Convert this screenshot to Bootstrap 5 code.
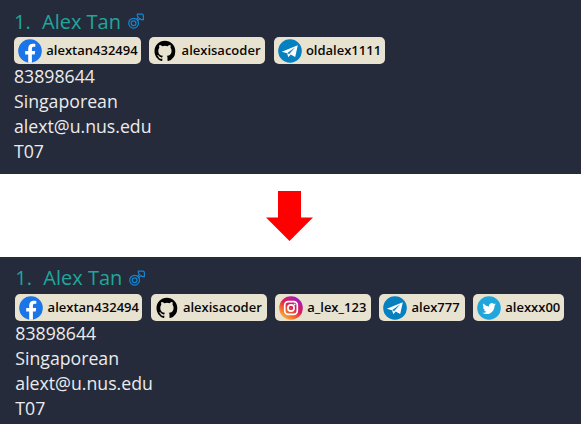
<!DOCTYPE html>
<html lang="en">
<head>
<meta charset="utf-8">
<title>Contact cards</title>
<link href="https://cdn.jsdelivr.net/npm/bootstrap@5.3.0/dist/css/bootstrap.min.css" rel="stylesheet">
<style>
body { font-family: "Open Sans", sans-serif; background: #fff; overflow: hidden; }
.contact { height: 174px; padding: 9px 0 0 14px; background: #252b3b; color: #ebebed; }
.contact-after { height: 167px; padding-left: 15.3px; }
.contact-name { font-size: 20px; line-height: 26px; height: 28px; color: #20a69b; }
.contact-after .contact-name { line-height: 24px; }
.contact-name svg { margin: 4px 0 0 7px; }
.number { width: 28px; }
.handles { gap: 8.3px; height: 27px; }
.handle { height: 27px; padding-left: 4px; border-radius: 5px; background: #e8e2d1; color: #080808; font-size: 13px; font-weight: 600; line-height: 27px; white-space: nowrap; }
.handle svg { width: 24px; height: 24px; margin-right: 4.3px; flex: none; }
.w-fb { width: 127px; }
.w-gh { width: 116px; }
.w-tg { width: 111.5px; }
.w-ig { width: 96px; }
.w-tg-short { width: 85.5px; }
.w-tw { width: 91px; }
.detail { font-size: 17.7px; line-height: 25px; height: 25px; }
.between { height: 83px; padding: 17px 2px 0 0; }
</style>
<script src="https://cdn.jsdelivr.net/npm/bootstrap@5.3.0/dist/js/bootstrap.bundle.min.js"></script>
</head>
<body>
<svg width="0" height="0" class="position-absolute">
  <defs>
    <linearGradient id="insta" x1="0.1" y1="0.95" x2="0.75" y2="0.05"><stop offset="0" stop-color="#ffc43c"/><stop offset=".3" stop-color="#f5702c"/><stop offset=".6" stop-color="#dc1f50"/><stop offset="1" stop-color="#a21cc0"/></linearGradient>
  </defs>
  <symbol id="male" viewBox="0 0 17 17"><g fill="none" stroke="#1286d2" stroke-width="1.2"><circle cx="5.6" cy="10.2" r="4.9"/><circle cx="5.6" cy="10.2" r="2.4"/><path d="M8.600 6.300 10.400 4.600Q9.400 4 9.400 2.600V1.200H13.800Q15.400 1.200 15.400 2.800V6.600H13.200L11.800 5.600 9.800 7.600"/></g></symbol>
  <symbol id="facebook" viewBox="0 0 24 24"><circle cx="12" cy="12" r="11.8" fill="#1b74e8"/><path fill="#fff" d="M10.2 23.7v-8.3H7.2V12h3V9.400c0-3 1.8-4.700 4.500-4.700 1.300 0 2.600.2 2.600.2v2.900h-1.500c-1.500 0-1.900.9-1.900 1.900V12h3.300l-.5 3.400h-2.800v8.300z"/></symbol>
  <symbol id="github" viewBox="0 0 24 24"><path transform="translate(1.500 1.800) scale(1.300)" d="M8 0C3.58 0 0 3.58 0 8c0 3.54 2.29 6.53 5.47 7.59.4.07.55-.17.55-.38 0-.19-.01-.82-.01-1.49-2.01.37-2.53-.49-2.69-.94-.09-.23-.48-.94-.82-1.13-.28-.15-.68-.52-.01-.53.63-.01 1.08.58 1.23.82.72 1.21 1.87.87 2.33.66.07-.52.28-.87.51-1.07-1.78-.2-3.64-.89-3.64-3.95 0-.87.31-1.59.82-2.15-.08-.2-.36-1.02.08-2.12 0 0 .67-.21 2.2.82a7.6 7.6 0 0 1 4 0c1.53-1.04 2.2-.82 2.2-.82.44 1.1.16 1.92.08 2.12.51.56.82 1.27.82 2.15 0 3.07-1.87 3.75-3.65 3.95.29.25.54.73.54 1.48 0 1.07-.01 1.93-.01 2.2 0 .21.15.46.55.38A8.01 8.01 0 0 0 16 8c0-4.42-3.58-8-8-8z"/></symbol>
  <symbol id="telegram" viewBox="0 0 24 24"><circle cx="12" cy="12" r="11.8" fill="#0580c1"/><path fill="#fff" d="M3.800 12.700 19.800 6.200 17.200 18 12.600 15.600 10.400 18.200 9 14.200z"/><path d="M9 14.200 17.300 8.200 11.200 15z" fill="#0580c1"/></symbol>
  <symbol id="instagram" viewBox="0 0 24 24"><circle cx="12" cy="12" r="11.8" fill="url(#insta)"/><g fill="none" stroke="#fff" stroke-width="1.700"><rect x="5.700" y="5.700" width="12.600" height="12.600" rx="3.500"/><circle cx="12" cy="12" r="3.100"/></g><circle cx="15.600" cy="8.400" r=".9" fill="#fff"/></symbol>
  <symbol id="twitter" viewBox="0 0 24 24"><circle cx="12" cy="12" r="11.8" fill="#20a6dc"/><path fill="#fff" transform="translate(5.400 5.400) scale(.84)" d="M5.03 15c6.04 0 9.34-5 9.34-9.33l-.01-.43A6.7 6.7 0 0 0 16 3.54a6.6 6.6 0 0 1-1.89.52 3.3 3.3 0 0 0 1.45-1.82 6.5 6.5 0 0 1-2.09.79A3.29 3.29 0 0 0 7.88 6.03 9.32 9.32 0 0 1 1.11 2.6a3.29 3.29 0 0 0 1.02 4.38A3.2 3.2 0 0 1 .64 6.58v.04a3.29 3.29 0 0 0 2.63 3.22 3.2 3.2 0 0 1-1.48.06 3.29 3.29 0 0 0 3.07 2.28A6.6 6.6 0 0 1 0 13.54 9.3 9.3 0 0 0 5.03 15"/></symbol>
</svg>

<section class="contact">
  <div class="contact-name d-flex align-items-start"><span class="number">1.</span><span>Alex Tan</span><svg width="17" height="17"><use href="#male"/></svg></div>
  <div class="handles d-flex">
    <span class="handle w-fb d-flex align-items-center"><svg><use href="#facebook"/></svg>alextan432494</span>
    <span class="handle w-gh d-flex align-items-center"><svg><use href="#github"/></svg>alexisacoder</span>
    <span class="handle w-tg d-flex align-items-center"><svg><use href="#telegram"/></svg>oldalex1111</span>
  </div>
  <div class="detail">83898644</div>
  <div class="detail">Singaporean</div>
  <div class="detail">alext@u.nus.edu</div>
  <div class="detail">T07</div>
</section>
<div class="between d-flex justify-content-center align-items-start">
  <svg width="48" height="50" viewBox="0 0 48 50"><path fill="#f00" d="M12 0h23v26.500h12L23.500 50 0 26.500h12z"/></svg>
</div>
<section class="contact contact-after">
  <div class="contact-name d-flex align-items-start"><span class="number">1.</span><span>Alex Tan</span><svg width="17" height="17"><use href="#male"/></svg></div>
  <div class="handles d-flex">
    <span class="handle w-fb d-flex align-items-center"><svg><use href="#facebook"/></svg>alextan432494</span>
    <span class="handle w-gh d-flex align-items-center"><svg><use href="#github"/></svg>alexisacoder</span>
    <span class="handle w-ig d-flex align-items-center"><svg><use href="#instagram"/></svg>a_lex_123</span>
    <span class="handle w-tg-short d-flex align-items-center"><svg><use href="#telegram"/></svg>alex777</span>
    <span class="handle w-tw d-flex align-items-center"><svg><use href="#twitter"/></svg>alexxx00</span>
  </div>
  <div class="detail">83898644</div>
  <div class="detail">Singaporean</div>
  <div class="detail">alext@u.nus.edu</div>
  <div class="detail">T07</div>
</section>
</body>
</html>
